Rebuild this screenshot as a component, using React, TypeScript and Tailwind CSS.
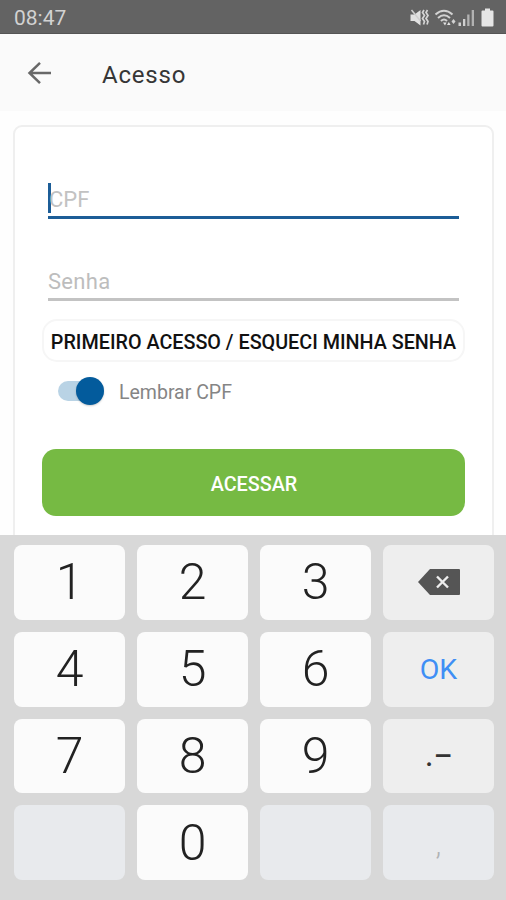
import clsx from "clsx";

function StatusBar() {
  return (
    <div className="flex h-[34px] items-center justify-between border-b border-[#555] bg-[#636363] pl-[14px] pr-[11px] pt-[3px] text-[#d2d2d2]">
      <span className="text-[21px] leading-none">08:47</span>
      <div className="flex items-center">
        <svg className="h-[20px] w-[20px]" viewBox="0 0 20 20" fill="none">
          <path d="M0.500 6.500h4L10.500 2v15.500L4.500 13h-4z" fill="#e2e2e2" />
          <path d="M1.500 2l9 11" stroke="#d0d0d0" strokeWidth="1.500" />
          <path d="M14 2l-1.500 2.500 2 3-2 3 2 3-1 3M17.500 2L16 4.500l2 3-2 3 2 3-1 3" stroke="#d4d4d4" strokeWidth="1.700" />
        </svg>
        <svg className="ml-[4px] h-[20px] w-[24px]" viewBox="0 0 24 20" fill="none" stroke="#d2d2d2">
          <path d="M1.500 6.500Q10-1 18.500 6.500M4 10q6-5.500 12 0M7 13q3-3 6 0" strokeWidth="2" />
          <path d="M9 14.500h3.500l-1.500 3zM13 17l1.800-3 1.800 3z" fill="#e2e2e2" stroke="none" />
          <path d="M17.500 13.500l2-2.500 2 2.500-2 2.500z" fill="#d2d2d2" stroke="none" />
        </svg>
        <svg className="h-[20px] w-[18px]" viewBox="0 0 18 20">
          <path d="M0.500 14.500h2.500V18H0.500zM5 11h2.300v7H5z" fill="#d0d0d0" />
          <path d="M9.200 6.500h2.300V18H9.200zM13.700 2H16v16h-2.300z" fill="#b2b2b2" />
        </svg>
        <svg className="ml-[5px] h-[20px] w-[14px]" viewBox="0 0 14 20" fill="#e6e6e6">
          <path d="M4 0.500h5v2h2.500q1 0 1 1v14q0 1-1 1h-10q-1 0-1-1v-14q0-1 1-1H4z" />
        </svg>
      </div>
    </div>
  );
}

function AppBar() {
  return (
    <header className="flex h-[77px] items-center bg-[#fafafa] pl-[27px]">
      <button type="button" aria-label="Voltar">
        <svg className="h-[24px] w-[24px]" viewBox="0 0 24 24" fill="none" stroke="#686868" strokeWidth="2.500">
          <path d="M24 12H2.500M13 1.800L2.500 12 13 22.200" />
        </svg>
      </button>
      <h1 className="ml-[51px] mt-[5px] text-[24px] leading-none tracking-[0.8px] text-[#363636]">Acesso</h1>
    </header>
  );
}

function LoginCard() {
  return (
    <section className="ml-[13px] mr-[12px] mt-[14px] h-[500px] rounded-[9px] border-2 border-[#efefef] bg-white px-[27px]">
      <div className="mx-[6px] mt-[56px] flex h-[36px] border-b-[3px] border-[#1c5d97]">
        <span className="h-[30px] w-[3px] bg-[#1c5d97]" />
        <span className="-ml-[2px] mt-[6px] text-[22px] leading-none text-[#c2c2c2]">CPF</span>
      </div>
      <div className="mx-[6px] mt-[46px] flex h-[36px] border-b-[3px] border-[#c3c3c3]">
        <span className="mt-[6px] text-[22px] leading-none tracking-[0.3px] text-[#bdbdbd]">Senha</span>
      </div>
      <button
        type="button"
        className="mt-[18px] flex h-[43px] w-full items-center justify-center whitespace-nowrap rounded-[15px] border-2 border-[#f6f6f6] pt-[4px] text-[19.75px] font-medium text-[#111]"
      >
        PRIMEIRO ACESSO / ESQUECI MINHA SENHA
      </button>
      <label className="mt-[14px] flex h-[30px] items-center pl-[16px]">
        <span className="flex h-[20px] w-[46px] items-center justify-end rounded-full bg-[#b9d3e5]">
          <span className="size-[28px] shrink-0 rounded-full bg-[#035b9c] shadow-[0_1px_2px_#0003]" />
        </span>
        <span className="ml-[15px] mt-[4px] text-[19.5px] leading-none text-[#858585]">Lembrar CPF</span>
      </label>
      <button
        type="button"
        className="mt-[43px] flex h-[67px] w-full items-center justify-center rounded-[14px] bg-[#76ba43] pl-[1px] pt-[5px] text-[19.75px] font-medium text-white"
      >
        ACESSAR
      </button>
    </section>
  );
}

function BackspaceIcon() {
  return (
    <svg className="h-[26px] w-[42px]" viewBox="0 0 42 26" fill="none">
      <path d="M12 0h29q1 0 1 1v24q0 1-1 1H12L0 13z" fill="#555" />
      <path d="M19 7.500l11 11M30 7.500l-11 11" stroke="#eee" strokeWidth="2.400" />
    </svg>
  );
}

const keys = ["1", "2", "3", "del", "4", "5", "6", "OK", "7", "8", "9", ".-", "", "0", "", ","];

function Key({ value }: { value: string }) {
  const digit = /^\d$/.test(value);
  return (
    <button
      type="button"
      className={clsx(
        "flex items-center justify-center rounded-[8px] leading-none",
        digit && "bg-[#fbfbfb] text-[50px] font-light text-[#222]",
        (value === "" || value === ",") && "bg-[#e8eaed]",
        (value === "del" || value === "OK" || value === ".-") && "bg-[#eee]",
      )}
    >
      {digit && value}
      {value === "del" && <BackspaceIcon />}
      {value === "OK" && <span className="pt-[2px] text-[28.5px] text-[#3f8ff5]">OK</span>}
      {value === ".-" && (
        <span className="flex items-baseline pb-[3px] text-[#333]">
          <span className="text-[34px] leading-none">.</span>
          <span className="text-[29px] font-medium leading-none">–</span>
        </span>
      )}
      {value === "," && <span className="pt-[5px] text-[30px] font-light text-[#b0b2b5]">,</span>}
    </button>
  );
}

function Keypad() {
  return (
    <div className="grid h-[365px] shrink-0 grid-cols-4 grid-rows-4 gap-x-[12px] gap-y-[12px] bg-[#d8d8d8] pb-[20px] pl-[14px] pr-[12px] pt-[10px]">
      {keys.map((value, i) => (
        <Key key={i} value={value} />
      ))}
    </div>
  );
}

export default function App() {
  return (
    <div className="flex h-[900px] w-[506px] flex-col overflow-hidden bg-[#fefefe] font-['Roboto',sans-serif]">
      <StatusBar />
      <AppBar />
      <main className="min-h-0 flex-1 overflow-hidden">
        <LoginCard />
      </main>
      <Keypad />
    </div>
  );
}
